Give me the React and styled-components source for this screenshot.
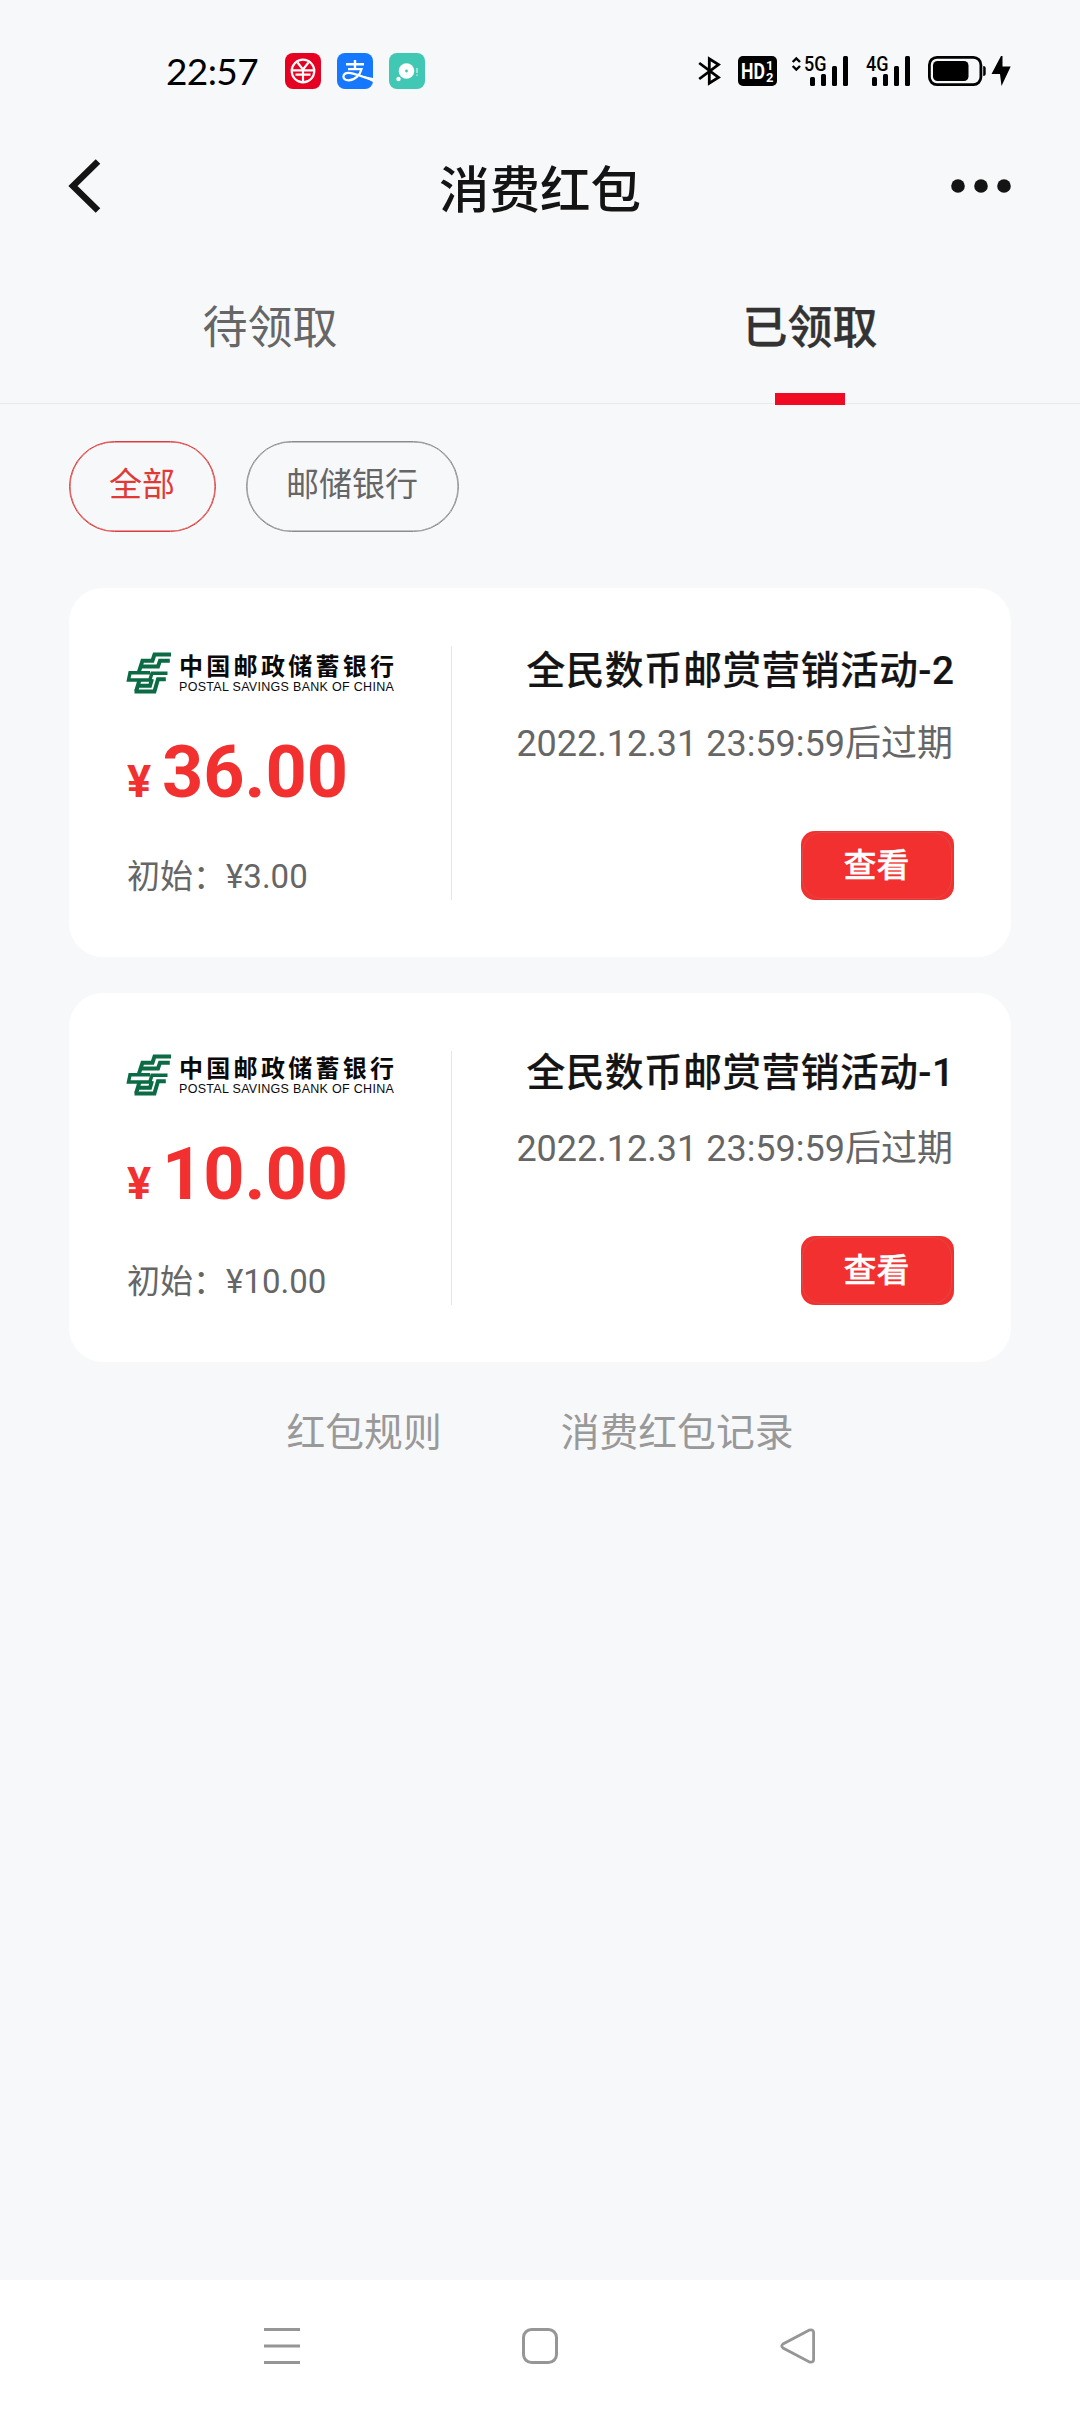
import React from "react";
import styled, { createGlobalStyle } from "styled-components";

const GlobalStyle = createGlobalStyle`
  * {
    box-sizing: border-box;
  }

  body {
    margin: 0;
    background: #f7f8fa;
    font-family: Roboto, "Noto Sans CJK SC", sans-serif;
  }
`;

const coupons = [
  {
    id: 1,
    title: "全民数币邮赏营销活动-2",
    amount: "36.00",
    initial: "¥3.00",
    expires: "2022.12.31 23:59:59后过期",
    lift: 0,
  },
  {
    id: 2,
    title: "全民数币邮赏营销活动-1",
    amount: "10.00",
    initial: "¥10.00",
    expires: "2022.12.31 23:59:59后过期",
    lift: 3,
  },
];

const RmbIcon = () => (
  <svg width="36" height="36" viewBox="0 0 36 36" fill="none" stroke="#fff">
    <rect width="36" height="36" rx="8" fill="#e60021" stroke="none" />
    <circle cx="18" cy="18" r="11.3" strokeWidth="2.2" />
    <path d="M12.5 9.5 L18 16.5 L23.5 9.5 M18 16 V29 M7 17.3 H29 M10.5 21.7 H25.5" strokeWidth="2.2" />
  </svg>
);

const AlipayIcon = () => (
  <svg width="36" height="36" viewBox="0 0 36 36" fill="none" stroke="#fff">
    <rect width="36" height="36" rx="8" fill="#1677ff" stroke="none" />
    <path d="M9 11.3 H27 M18 7 V16" strokeWidth="2.4" />
    <path d="M11 16.2 H24.5 C23 22 18 27.3 11.5 27.3 C4.5 27.3 5 19.8 11.5 19.8 C18 19.8 24 24 36 27" strokeWidth="2.2" />
    <path d="M23 22.2 L36 25 V29 Z" fill="#fff" stroke="none" />
  </svg>
);

const BubbleIcon = () => (
  <svg width="36" height="36" viewBox="0 0 36 36" fill="#fff">
    <rect width="36" height="36" rx="8" fill="#40c8b5" />
    <circle cx="17.5" cy="18" r="7.8" />
    <circle cx="9.5" cy="26" r="2.2" />
    <circle cx="17.5" cy="18" r="1.4" fill="#40c8b5" />
    <path d="M27.4 15 h1.2 v5 h-1.2z M27.4 21.5 h1.2 v1.3 h-1.2z" opacity="0.8" />
  </svg>
);

const BluetoothIcon = () => (
  <svg width="25" height="30" viewBox="0 0 25 30" fill="none" stroke="#000" strokeWidth="2.8">
    <path d="M1.2 7 L20.5 21.5 L11.3 27.3 V2.7 L20.5 8.5 L1.2 23" />
  </svg>
);

const HdIcon = () => (
  <svg width="39" height="30" viewBox="0 0 39 30" fill="#fff" fontFamily="Roboto, sans-serif" fontWeight="700">
    <rect width="39" height="30" rx="5" fill="#000" />
    <text x="3" y="23" fontSize="22" textLength="24" lengthAdjust="spacingAndGlyphs">HD</text>
    <text x="28" y="14.2" fontSize="13">1</text>
    <text x="28" y="25.5" fontSize="13">2</text>
  </svg>
);

const SignalIcon = ({ label, arrows }) => (
  <svg width={arrows ? 59 : 47} height="30" viewBox={arrows ? "-12 0 59 30" : "0 0 47 30"}>
    {arrows && (
      <path d="M-11.3 6 L-7.7 2.4 L-4 6 M-11.3 10 L-7.7 13.6 L-4 10" fill="none" stroke="#000" strokeWidth="2.4" />
    )}
    <text x="0" y="14.7" fontSize="19.5" fontWeight="500" fontFamily="Roboto, sans-serif" textLength="22.5" lengthAdjust="spacingAndGlyphs">
      {label}
    </text>
    <rect x="6" y="21" width="5" height="9" rx="1.5" />
    <rect x="17" y="18" width="5" height="12" rx="1.5" />
    <rect x="28" y="10" width="5" height="20" rx="1.5" />
    <rect x="39" y="0" width="5" height="30" rx="1.5" />
  </svg>
);

const BatteryIcon = () => (
  <svg width="84" height="30" viewBox="0 0 84 30">
    <rect x="1.4" y="1.4" width="51.5" height="27.2" rx="7.5" fill="none" stroke="#000" strokeWidth="2.8" />
    <rect x="5" y="5" width="35.5" height="20" rx="4.5" />
    <path d="M55.2 10 Q57.7 10 57.7 12 V18 Q57.7 20 55.2 20 Z" />
    <path d="M73 0 L63.5 18 H72 L73.5 30 L82.7 10.5 H74.5 V0 Z" />
  </svg>
);

const PostalMark = () => (
  <svg width="46" height="43" viewBox="0 0 46 43" fill="none" stroke="#0b6b45" strokeWidth="4">
    <path d="M45 3.5 H28.5 L26.5 9.7 H16.5 L12.5 22" />
    <path d="M43.8 9.7 H34 L32 15.5 H15" />
    <path d="M41.5 22.2 H26 L23.8 29 H2.5 L4 21.8 H24" strokeWidth="3.4" />
    <path d="M13.5 29 L10.2 40" />
    <path d="M39.8 28.3 H32 L28.4 40.6 H8.5" />
    <path d="M26 28 L24 34.7 H11" />
    <path d="M7 25.4 H23" stroke="#fff" strokeWidth="1.3" />
  </svg>
);

const CouponCard = ({ coupon }) => (
  <Card>
    <CardLeft>
      <Raised $by={coupon.lift}>
        <BankLogo>
          <PostalMark />
          <BankNames>
            <BankName>中国邮政储蓄银行</BankName>
            <BankNameEn>POSTAL SAVINGS BANK OF CHINA</BankNameEn>
          </BankNames>
        </BankLogo>
        <Amount>
          <Currency>¥</Currency>
          {coupon.amount}
        </Amount>
      </Raised>
      <Initial>初始：{coupon.initial}</Initial>
    </CardLeft>
    <CardRight>
      <Raised $by={coupon.lift}>
        <CouponTitle>{coupon.title}</CouponTitle>
      </Raised>
      <Expires>{coupon.expires}</Expires>
      <ViewButton>
        <ButtonRing>查看</ButtonRing>
      </ViewButton>
    </CardRight>
  </Card>
);

const App = () => {
  return (
    <Page>
      <GlobalStyle />
      <StatusBar>
        <Clock>22:57</Clock>
        <AppIcons>
          <RmbIcon />
          <AlipayIcon />
          <BubbleIcon />
        </AppIcons>
        <SystemIcons>
          <BluetoothIcon />
          <HdIcon />
          <SignalIcon label="5G" arrows />
          <SignalIcon label="4G" />
          <BatteryIcon />
        </SystemIcons>
      </StatusBar>
      <Header>
        <HeaderSide>
          <svg width="34" height="54" viewBox="0 0 34 54" fill="none" stroke="#141414" strokeWidth="6.5">
            <path d="M30 2.5 L5 27 L30 51.5" />
          </svg>
        </HeaderSide>
        <HeaderTitle>消费红包</HeaderTitle>
        <HeaderSide $end>
          <svg width="62" height="16" viewBox="0 0 62 16" fill="#141414">
            <circle cx="8" cy="8" r="6.8" />
            <circle cx="31" cy="8" r="6.8" />
            <circle cx="54" cy="8" r="6.8" />
          </svg>
        </HeaderSide>
      </Header>
      <Tabs>
        <Tab>待领取</Tab>
        <Tab $active>已领取</Tab>
      </Tabs>
      <Filters>
        <Pill $active $width={147}>全部</Pill>
        <Pill $width={213}>邮储银行</Pill>
      </Filters>
      <CardList>
        {coupons.map((c) => (
          <CouponCard key={c.id} coupon={c} />
        ))}
      </CardList>
      <Links>
        <span>红包规则</span>
        <span>消费红包记录</span>
      </Links>
      <NavBar>
        <svg width="36" height="36" viewBox="0 0 36 36" stroke="#969696" strokeWidth="3">
          <path d="M0 1.5 H36 M0 18 H36 M0 34.5 H36" />
        </svg>
        <svg width="36" height="36" viewBox="0 0 36 36" fill="none" stroke="#969696" strokeWidth="3">
          <rect x="1.5" y="1.5" width="33" height="33" rx="8" />
        </svg>
        <svg width="36" height="36" viewBox="0 0 36 36" fill="none" stroke="#969696" strokeWidth="2.8">
          <path d="M29 2.2 L3 16 Q0.5 18 3 20 L29 33.8 Q33.6 35 33.6 31.5 V4.5 Q33.6 1 29 2.2 Z" />
        </svg>
      </NavBar>
    </Page>
  );
};

export default App;

const Page = styled.div`
  display: flex;
  flex-direction: column;
  width: 1080px;
  height: 2412px;
  overflow: hidden;
  background: #f7f8fa;

  svg {
    display: block;
    flex-shrink: 0;
    overflow: visible;
  }
`;

const StatusBar = styled.div`
  display: flex;
  align-items: center;
  height: 142px;
  padding: 0 68px 0 166px;
`;

const Clock = styled.div`
  width: 119px;
  color: #000;
  font-family: Lato, sans-serif;
  font-size: 37px;
  letter-spacing: -0.6px;
  line-height: 50px;
`;

const AppIcons = styled.div`
  display: flex;
  gap: 16px;
`;

const SystemIcons = styled.div`
  display: flex;
  gap: 15px;
  margin-left: auto;
`;

const Header = styled.div`
  display: flex;
  align-items: center;
  justify-content: space-between;
  height: 88px;
  margin-bottom: 2px;
  padding: 0 68px;
`;

const HeaderSide = styled.div`
  display: flex;
  width: 100px;
  justify-content: ${(p) => (p.$end ? "flex-end" : "flex-start")};
`;

const HeaderTitle = styled.div`
  padding-top: 10px;
  color: #141414;
  font-size: 50.5px;
  font-weight: 500;
  line-height: 60px;
`;

const Tabs = styled.div`
  display: flex;
  height: 172px;
  border-bottom: 1px solid #e8e9eb;
`;

const Tab = styled.div`
  display: flex;
  flex: 1;
  flex-direction: column;
  align-items: center;
  justify-content: space-between;
  height: 173px;
  padding-top: 67px;
  color: ${(p) => (p.$active ? "#333" : "#666")};
  font-size: 45px;
  font-weight: ${(p) => (p.$active ? 500 : 400)};
  line-height: 60px;
  -webkit-text-stroke: ${(p) => (p.$active ? "0.3px #333" : "0")};

  &::after {
    content: "";
    width: 70px;
    height: 12px;
    background: ${(p) => (p.$active ? "#f00a23" : "transparent")};
  }
`;

const Filters = styled.div`
  display: flex;
  gap: 30px;
  margin-top: 37px;
  padding: 0 69px;
`;

const Pill = styled.div`
  width: ${(p) => p.$width}px;
  height: 91px;
  border: 1px solid ${(p) => (p.$active ? "#dc3c3a" : "#8c8c8c")};
  border-radius: 46px;
  box-shadow: inset 0 0 0 0.5px ${(p) => (p.$active ? "#dc3c3a" : "#8c8c8c")};
  color: ${(p) => (p.$active ? "#e03a36" : "#666")};
  font-size: 33px;
  line-height: 86px;
  text-align: center;
  text-indent: -1px;
`;

const CardList = styled.div`
  display: flex;
  flex-direction: column;
  gap: 36px;
  margin-top: 56px;
  padding: 0 69px;
`;

const Card = styled.div`
  display: flex;
  height: 369px;
  padding: 58px 57px 57px;
  border-radius: 34px;
  background: #fff;
`;

const CardLeft = styled.div`
  width: 326px;
  border-right: 1px solid #e6e6e6;
`;

const CardRight = styled.div`
  display: flex;
  flex: 1;
  flex-direction: column;
  align-items: flex-end;
  white-space: nowrap;
`;

const Raised = styled.div`
  margin-top: -${(p) => p.$by}px;
  padding-bottom: ${(p) => p.$by}px;
`;

const BankLogo = styled.div`
  display: flex;
  gap: 7px;
  padding-top: 5px;
`;

const BankNames = styled.div`
  display: flex;
  flex-direction: column;
  color: #0a0a0a;
  white-space: nowrap;
`;

const BankName = styled.div`
  height: 28px;
  font-family: "Noto Sans CJK SC", sans-serif;
  font-size: 24px;
  font-weight: 700;
  letter-spacing: 3.3px;
  line-height: 28px;
`;

const BankNameEn = styled.div`
  font-family: "Liberation Sans", sans-serif;
  font-size: 12.5px;
  letter-spacing: 0.3px;
  line-height: 16px;
`;

const Amount = styled.div`
  display: flex;
  align-items: baseline;
  height: 80px;
  margin-top: 38px;
  padding-left: 1px;
  color: #f33030;
  font-size: 72px;
  font-weight: 700;
  line-height: 80px;
`;

const Currency = styled.span`
  width: 35px;
  font-size: 45px;
`;

const Initial = styled.div`
  margin-top: 43px;
  padding-left: 1px;
  color: #666;
  font-size: 33px;
  line-height: 42px;
`;

const CouponTitle = styled.div`
  margin-right: -0.5px;
  color: #141414;
  font-size: 38.7px;
  font-weight: 500;
  letter-spacing: 0.5px;
  line-height: 50px;
  -webkit-text-stroke: 0.2px #141414;
`;

const Expires = styled.div`
  margin-top: 24px;
  padding-right: 1px;
  color: #666;
  font-size: 36px;
  line-height: 48px;
`;

const ViewButton = styled.div`
  width: 153px;
  height: 69px;
  margin-top: auto;
  padding: 1px 2px 1px 1px;
  border-radius: 14px;
  background: #f33030;
`;

const ButtonRing = styled.div`
  height: 67px;
  border: 1px solid #dc4a4a;
  border-radius: 20px;
  color: #fff;
  font-size: 33px;
  font-weight: 500;
  line-height: 65px;
  text-align: center;
  text-indent: -1px;
  -webkit-text-stroke: 0.3px #fff;
`;

const Links = styled.div`
  display: flex;
  gap: 119px;
  justify-content: center;
  margin-top: 46px;
  color: #999;
  font-size: 38.8px;
  line-height: 50px;
`;

const NavBar = styled.div`
  display: flex;
  align-items: center;
  justify-content: space-between;
  height: 132px;
  margin-top: auto;
  padding: 0 264px;
  background: #fff;
`;
